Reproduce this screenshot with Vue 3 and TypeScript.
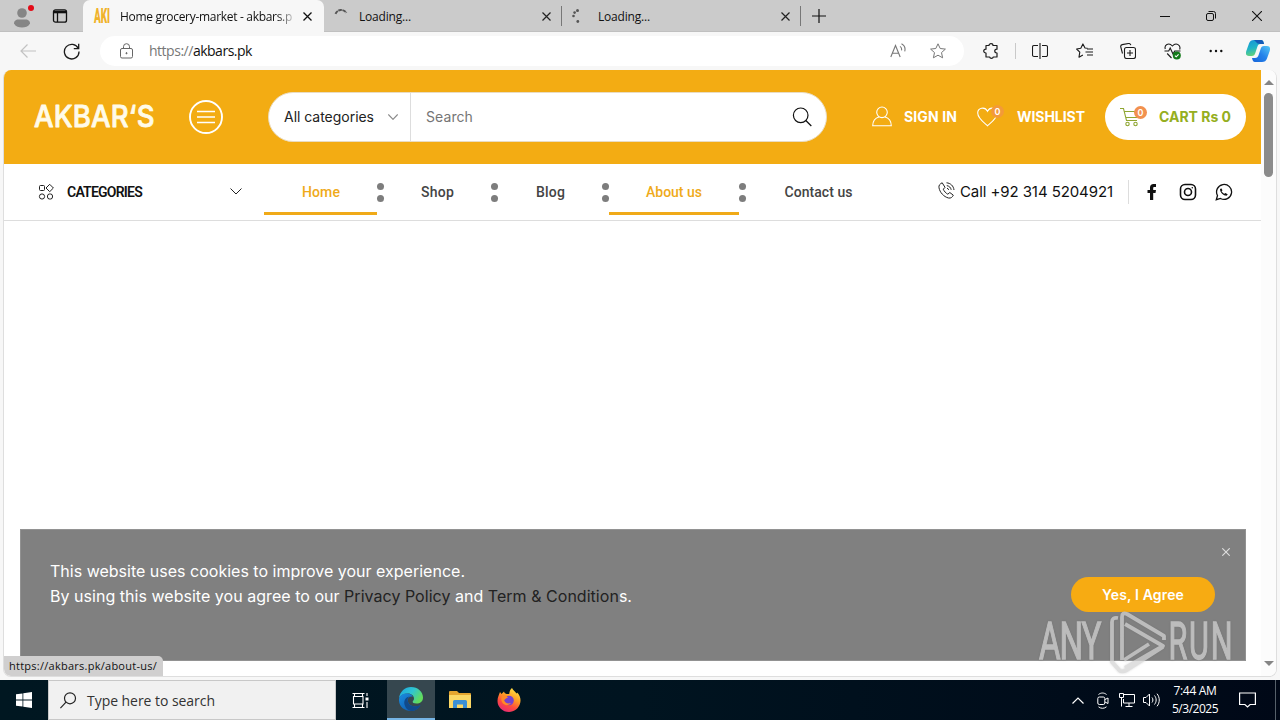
<script setup lang="ts">
import type { Directive } from 'vue'

interface NavItem {
  label: string
  key: string
  textWidth: number
  active: boolean
}

const navItems: NavItem[] = [
  { label: 'Home', key: 'home', textWidth: 38, active: true },
  { label: 'Shop', key: 'shop', textWidth: 33, active: false },
  { label: 'Blog', key: 'blog', textWidth: 29, active: false },
  { label: 'About us', key: 'about', textWidth: 56, active: true },
  { label: 'Contact us', key: 'contact', textWidth: 68, active: false },
]

// Spaces the letters so that a label takes exactly the given width.
const vFit: Directive<HTMLElement, number> = {
  mounted(el, { value }) {
    const count = (el.textContent ?? '').length
    if (count < 2) return
    const natural = el.getBoundingClientRect().width
    el.style.letterSpacing = `${(value - natural) / count}px`
  },
}
</script>

<template>
  <div class="screen">
    <header class="tabs">
      <div class="tab-tools">
        <svg class="profile" width="28" height="28" viewBox="0 0 28 28">
          <circle cx="14" cy="11" r="4.800" fill="#858585" />
          <path d="M6 21.500c0-3 2.500-4 4-4h8c1.500 0 4 1 4 4-1.500 3-5 4-8 4s-6.500-1-8-4z" fill="#858585" />
          <circle cx="23" cy="6" r="3" fill="#e30b17" />
        </svg>
        <svg width="16" height="16" viewBox="0 0 16 16" fill="none" stroke="#111" stroke-width="1.300">
          <rect x="1.500" y="1.800" width="13" height="12.400" rx="2" />
          <path d="M2 4h12" stroke-width="2.600" />
          <path d="M5.500 4v10" />
        </svg>
      </div>
      <div class="tab tab-active">
        <svg class="favicon" width="17" height="24" viewBox="0 0 17 24">
          <text transform="scale(.5 1)" x="0" y="19" font-family="Roboto, sans-serif" font-size="20" font-weight="900" textLength="32" fill="#f0b22a">AKI</text>
        </svg>
        <div class="tab-title title-page"><span v-fit="172">Home grocery-market - akbars.p</span></div>
        <svg class="close" width="9" height="9" viewBox="0 0 9 9" stroke="#111" stroke-width="1.300"><path d="M.5.5l8 8M8.500.5l-8 8" /></svg>
      </div>
      <div class="tab tab-idle">
        <svg class="spinner" width="16" height="16" viewBox="0 0 16 16" fill="none" stroke="#555" stroke-width="2">
          <path d="M2.500 5.800A6.200 6.200 0 0 1 13.400 4.800" stroke-dasharray="3.600 .6" />
        </svg>
        <div class="tab-title"><span v-fit="52">Loading...</span></div>
        <svg class="close" width="9" height="9" viewBox="0 0 9 9" stroke="#222" stroke-width="1.200"><path d="M.5.5l8 8M8.500.5l-8 8" /></svg>
      </div>
      <div class="tab tab-idle tab-third">
        <svg class="spinner" width="16" height="16" viewBox="0 0 16 16" fill="#555">
          <circle cx="6.500" cy="2.500" r="1.500" /><circle cx="3.600" cy="4.600" r="1.300" /><circle cx="2.500" cy="8" r="1.300" /><circle cx="6.800" cy="13.500" r="1.400" />
        </svg>
        <div class="tab-title"><span v-fit="52">Loading...</span></div>
        <svg class="close" width="9" height="9" viewBox="0 0 9 9" stroke="#222" stroke-width="1.200"><path d="M.5.5l8 8M8.500.5l-8 8" /></svg>
      </div>
      <div class="new-tab">
        <svg width="14" height="14" viewBox="0 0 14 14" stroke="#111" stroke-width="1.200"><path d="M7 0v14M0 7h14" /></svg>
      </div>
      <div class="window-buttons">
        <svg width="10" height="10" viewBox="0 0 10 10" stroke="#111"><path d="M0 5.500h10" /></svg>
        <svg width="10" height="10" viewBox="0 0 10 10" fill="none" stroke="#111"><rect x=".5" y="2.500" width="7" height="7" rx="1.500" /><path d="M2.500.5h5a2 2 0 0 1 2 2v5" /></svg>
        <svg width="10" height="10" viewBox="0 0 10 10" stroke="#111" stroke-width="1.100"><path d="M0 0l10 10M10 0L0 10" /></svg>
      </div>
    </header>

    <div class="toolbar">
      <svg class="back" width="16" height="16" viewBox="0 0 16 16" fill="none" stroke="#c2c2c2" stroke-width="1.200"><path d="M16 8H1M7.500 1.500L1 8l6.500 6.500" /></svg>
      <svg class="reload" width="17" height="17" viewBox="0 0 17 17" fill="none" stroke="#1b1b1b" stroke-width="1.300"><path d="M15.300 5.500A7.300 7.300 0 1 0 16 8.500M15.700 .8v4.900h-4.900" /></svg>
      <div class="address">
        <svg class="lock" width="13" height="16" viewBox="0 0 13 16" fill="none" stroke="#666"><rect x=".5" y="5.500" width="12" height="9.500" rx="1.500" /><path d="M3.500 5.500V3.700a3 3 0 0 1 6 0v1.800" /><circle cx="6.500" cy="10.200" r=".6" fill="#666" /></svg>
        <span v-fit="103" class="url"><i>https://</i>akbars.pk</span>
        <svg class="aloud" width="16" height="16" viewBox="0 0 16 16" fill="none" stroke="#777" stroke-width="1.100"><path d="M.8 14L5.500 2.500 10.200 14M2.300 10.200h6.400M10 3.400c1.400.9 1.900 2.300 1.500 4M11.500.8c2.900 1.600 4.100 4.400 3.200 7.500" /></svg>
        <svg class="star" width="16" height="16" viewBox="0 0 16 16" fill="none" stroke="#777" stroke-linejoin="round"><path d="M8 .8l2.200 4.700 5.200.6-3.900 3.500 1.100 5.200L8 12.200l-4.600 2.600 1.100-5.200L.6 6.100l5.200-.6z" /></svg>
      </div>
      <div class="tool">
        <svg width="16" height="16" viewBox="0 0 16 16" fill="none" stroke="#1b1b1b" stroke-width="1.200" stroke-linejoin="round"><path d="M3 2.500h3c0-2.500 4-2.500 4 0h4v3.700c-3 0-3 3.800 0 3.800v4h-3.700c-.5 1.700-3.200 1.700-3.700 0H3V10c-3 0-3-3.800 0-3.800z" /></svg>
      </div>
      <div class="tool-rule"></div>
      <div class="tool">
        <svg width="16" height="16" viewBox="0 0 16 16" fill="none" stroke="#1b1b1b" stroke-width="1.100"><path d="M6 2.500H2a1.500 1.500 0 0 0-1.500 1.500v8A1.500 1.500 0 0 0 2 13.500h4M10 2.500h4A1.500 1.500 0 0 1 15.500 4v8a1.500 1.500 0 0 1-1.500 1.500h-4M8 0v16" /></svg>
      </div>
      <div class="tool">
        <svg width="17" height="16" viewBox="0 0 17 16" fill="none" stroke="#1b1b1b" stroke-width="1.100" stroke-linejoin="round"><path d="M11.500 5.200L9 5 6.900.9 4.800 5.300.6 6l3.200 3.200-.8 5 3.900-2.100M11 6h6M9.500 9H17M11 12h6" /></svg>
      </div>
      <div class="tool">
        <svg width="16" height="16" viewBox="0 0 16 16" fill="none" stroke="#1b1b1b" stroke-width="1.100"><rect x="4.500" y="4.500" width="11" height="11" rx="2" /><path d="M10 7v6M7 10h6M2.500 10.500L.8 4A2 2 0 0 1 2.200 1.600L8.500.5a2 2 0 0 1 2.300 1.700" /></svg>
      </div>
      <div class="tool">
        <svg width="17" height="17" viewBox="0 0 17 17" fill="none" stroke="#1b1b1b" stroke-width="1.100"><path d="M1.300 6C0 2.500 4.500-1.300 8.400 3 12.300-1.300 17.200 2.500 15.600 6.500M.5 8h4.200l1.500-3 2.800 6 1.700-3h5.800M3.200 10.500L7.500 15" /><circle cx="12.800" cy="12.500" r="4" fill="#137a19" stroke="none" /><path d="M10.900 12.600l1.300 1.200 2.400-2.500" stroke="#fff" /></svg>
      </div>
      <div class="tool">
        <svg width="14" height="4" viewBox="0 0 14 4" fill="#111"><circle cx="1.700" cy="2" r="1.200" /><circle cx="7" cy="2" r="1.200" /><circle cx="12.300" cy="2" r="1.200" /></svg>
      </div>
      <div class="tool tool-copilot">
        <svg width="24" height="24" viewBox="0 0 24 24">
          <defs>
            <linearGradient id="cp-left" x1="0" y1="0" x2="0.3" y2="1"><stop offset="0" stop-color="#1693d8" /><stop offset=".55" stop-color="#20b4c7" /><stop offset="1" stop-color="#62d17a" /></linearGradient>
            <linearGradient id="cp-right" x1="1" y1="0" x2="0" y2="1"><stop offset="0" stop-color="#55c8f5" /><stop offset=".5" stop-color="#2482ea" /><stop offset="1" stop-color="#1764d9" /></linearGradient>
          </defs>
          <path d="M8 1h7c2 0 2.500 2 3 4h-3.500c-2 0-2.700 1-3.200 3l-2 6c-.6 2-1.500 3-3.500 3H3c-3 0-3.500-2-2.700-5L3 4.500C3.800 2 5.500 1 8 1z" fill="url(#cp-left)" />
          <path d="M16 23H9c-2 0-2.500-2-3-4h3c2 0 3-1 3.600-3l2-6c.6-2 1.400-3 3.400-3h3c3 0 3.500 2 2.700 5L21 19.500c-.8 2.500-2.500 3.500-5 3.500z" fill="url(#cp-right)" />
          <path d="M8 1h7c2 0 2.500 2 3 4h-3.500l-3-.5z" fill="#145bb8" />
        </svg>
      </div>
    </div>

    <main class="viewport">
      <div class="page">
        <div class="shop-header">
          <svg class="logo" width="122" height="40" viewBox="0 0 122 40">
            <text transform="scale(.92 1)" x="0" y="30.500" font-family="Inter, sans-serif" font-size="30" font-weight="500" textLength="131" fill="#fffbe9" stroke="#fffbe9" stroke-width=".8" stroke-linejoin="round">AKBAR‘S</text>
          </svg>
          <svg class="menu" width="34" height="34" viewBox="0 0 34 34" fill="none" stroke="#fff"><circle cx="17" cy="17" r="16" stroke-width="1.900" /><path d="M8 11.500h18M8 17h18M8 22.500h18" stroke-width="1.400" /></svg>
          <div class="search">
            <div class="search-category">
              <span v-fit="90">All categories</span>
              <svg width="10" height="6" viewBox="0 0 10 6" fill="none" stroke="#888" stroke-width="1.200"><path d="M.3.5L5 5.300 9.700.5" /></svg>
            </div>
            <span v-fit="47" class="search-hint">Search</span>
            <svg class="search-icon" width="20" height="20" viewBox="0 0 20 20" fill="none" stroke="#111" stroke-width="1.200"><circle cx="8.700" cy="8.300" r="7.300" /><path d="M13.800 13.500l5.500 5.500" /></svg>
          </div>
          <svg class="user" width="20" height="21" viewBox="0 0 20 21" fill="none" stroke="#fff" stroke-width="1.100"><circle cx="10" cy="6.300" r="5.300" /><path d="M7 11C3 12 .8 15 .7 19.800h18.600C19.200 15 17 12 13 11" /></svg>
          <b v-fit="53" class="sign-in">SIGN IN</b>
          <div class="heart">
            <svg width="21" height="20" viewBox="0 0 21 20" fill="none" stroke="#fff" stroke-width="1.100"><path d="M10.500 18.800C7 15.700.7 11.200.7 6c0-5 7-7 9.800-1.700C13.300-1 20.300 1 20.300 6c0 5.200-6.300 9.700-9.800 12.800z" /></svg>
            <em class="badge">0</em>
          </div>
          <b v-fit="68" class="wishlist">WISHLIST</b>
          <div class="cart">
            <div class="cart-icon">
              <svg width="20" height="20" viewBox="0 0 20 20" fill="none" stroke="#8fa632" stroke-width="1.100"><path d="M0 1.500h3.500l3 12H17M4.500 4.500h14L17 10.500H6" /><circle cx="7.500" cy="17" r="1.700" /><circle cx="15.500" cy="17" r="1.700" /></svg>
              <em class="badge">0</em>
            </div>
            <b v-fit="72">CART Rs 0</b>
          </div>
        </div>

        <nav class="nav">
          <div class="all-cats">
            <svg width="16" height="16" viewBox="0 0 16 16" fill="none" stroke="#222"><rect x="1.500" y="1.500" width="5" height="5" rx="1" /><path d="M11.700.3l3.700 3.700-3.700 3.700L8 4z" /><circle cx="4" cy="12.500" r="2.600" /><rect x="9.500" y="10" width="5" height="5" rx="2" /></svg>
            <b v-fit="75">CATEGORIES</b>
            <svg class="cats-arrow" width="12" height="7" viewBox="0 0 12 7" fill="none" stroke="#222"><path d="M.5.5L6 6 11.500.5" /></svg>
          </div>
          <template v-for="(item, i) in navItems" :key="item.key">
            <div v-if="i > 0" class="nav-dots"><i></i><i></i></div>
            <a class="nav-item" :class="[item.key, { active: item.active }]"><span v-fit="item.textWidth">{{ item.label }}</span></a>
          </template>
          <div class="contact-bar">
            <svg width="17" height="17" viewBox="0 0 17 17" fill="none" stroke="#222"><path d="M4.200.8C2 1.800.5 3.300 1 5.800c.8 4.500 4.700 9 9.500 10.200 2.500.5 4-1 4.800-2.800l-3.500-2.700-2 1.700C8 11.300 6 9.200 5.300 7.200L7 5.300z" /><path d="M8.500.8c4 .3 7 3 7.500 7.200M8.800 3.600c2.400.4 4 2 4.400 4.200M9 6.200c1 .3 1.400.8 1.700 1.700" /></svg>
            <span v-fit="153" class="phone">Call +92 314 5204921</span>
            <svg class="social" width="16" height="18" viewBox="0 0 16 18" fill="#111"><path d="M6 17V10H3.500V7H6V4.600C6 2.200 7.300 1 9.500 1H12v2.900h-1.500C9.500 3.900 9.200 4.300 9.200 5.200V7H12l-.5 3H9.200v7z" /></svg>
            <svg class="social" width="18" height="18" viewBox="0 0 18 18" fill="none" stroke="#111" stroke-width="1.600"><rect x="1.500" y="1.500" width="15" height="15" rx="4.500" /><circle cx="9" cy="9" r="3.500" /><circle cx="13.300" cy="4.700" r=".8" fill="#111" stroke="none" /></svg>
            <svg class="social" width="18" height="18" viewBox="0 0 18 18" fill="none" stroke="#111" stroke-width="1.300"><path d="M1.300 16.700l1.200-4.200A7.500 7.500 0 1 1 5.500 15.500z" /><path d="M6.200 5.200L5 6.300c.2 3.500 3.300 6.400 6.500 6.500l1.300-1.300-2.200-1.600-1.300.9C8 10.200 7 9.200 6.600 8.300l.9-1z" fill="#111" stroke="none" /></svg>
          </div>
        </nav>

        <section class="cookies">
          <div class="cookie-text">
            <p><span v-fit="415">This website uses cookies to improve your experience.</span></p>
            <p><span v-fit="582">By using this website you agree to our <a>Privacy Policy</a> and <a>Term &amp; Condition</a>s.</span></p>
          </div>
          <div class="cookie-side">
            <svg width="8" height="8" viewBox="0 0 8 8" stroke="#ddd" stroke-width="1.100"><path d="M.3.3l7.400 7.400M7.700.3L.3 7.700" /></svg>
            <button type="button"><span v-fit="82">Yes, I Agree</span></button>
          </div>
        </section>
      </div>
      <div class="scrollbar">
        <svg width="10" height="5" viewBox="0 0 10 5" fill="#858585"><path d="M0 5L5 0l5 5z" /></svg>
        <div class="thumb"></div>
        <svg class="down" width="10" height="5" viewBox="0 0 10 5" fill="#858585"><path d="M0 0l5 5 5-5z" /></svg>
      </div>
      <div class="status"><span v-fit="148">https://akbars.pk/about-us/</span></div>
    </main>

    <footer class="taskbar">
      <div class="start">
        <svg width="16" height="16" viewBox="0 0 16 16" fill="#fff"><path d="M0 2.300L6.500 1.400v6.200H0zM7.300 1.300L16 0v7.600H7.300zM0 8.400h6.500v6.200L0 13.700zM7.300 8.400H16V16l-8.700-1.300z" /></svg>
      </div>
      <div class="task-search">
        <svg width="17" height="17" viewBox="0 0 17 17" fill="none" stroke="#222" stroke-width="1.200"><circle cx="10" cy="6.300" r="5.500" /><path d="M6 10.200L.4 16.200" /></svg>
        <span v-fit="128">Type here to search</span>
      </div>
      <div class="task">
        <svg width="17" height="17" viewBox="0 0 17 17" fill="none" stroke="#fff" stroke-width="1.100"><path d="M.5 1.500h12M2.500 1.500v3M10.500 1.500v3M1.500 4.500h9.500v7.500H1.500zM.5 15.500h12M2.500 12v3.500M10.500 12v3.500M15 1v3M15 10v6" /><path d="M13.500 5.500h3v3h-3z" fill="#fff" stroke="none" /></svg>
      </div>
      <div class="task task-open">
        <svg width="24" height="24" viewBox="0 0 24 24">
          <defs>
            <linearGradient id="ed-top" x1="0" y1="0" x2="1" y2=".5"><stop offset="0" stop-color="#1ba4df" /><stop offset=".55" stop-color="#2fc5d2" /><stop offset="1" stop-color="#62dc5c" /></linearGradient>
            <linearGradient id="ed-low" x1="0" y1="0" x2="1" y2="1"><stop offset="0" stop-color="#1a8de0" /><stop offset="1" stop-color="#0d4fa3" /></linearGradient>
          </defs>
          <path d="M0 11C1 4.500 6 0 12 0c7 0 12 5 12 10.500 0 4-3 6-6.500 6-3 0-4-1-3.800-2 .1-.7 1.300-1.200 1.300-3C15 9 12.500 6.500 9 6.500 4.500 6.500 1.500 8.500 0 11z" fill="url(#ed-top)" />
          <path d="M0 12c.5-4 5-6 9-5.500 2.500.3 4 1.500 5 3-4.500-.5-6 2.500-5 5.500 1.200 4 6.500 6 12.500 3-2 4-6 6-9.500 6C5 24-.5 19 0 12z" fill="url(#ed-low)" />
          <path d="M9 15c-1-3 0-5 2-5.500-4 .2-6.500 4-5.500 8 .8 3.500 3.500 6 6.500 6.500 3.500 0 7.500-2 9.500-6-6 3-11.300 1-12.500-3z" fill="#114a8b" />
        </svg>
      </div>
      <div class="task">
        <svg width="22" height="20" viewBox="0 0 22 20"><path d="M0 2a1 1 0 0 1 1-1h7l2 2h11a1 1 0 0 1 1 1v4H0z" fill="#e5a52f" /><path d="M0 5h22v13H0z" fill="#fbd765" /><path d="M4 18v-6.500A1.500 1.500 0 0 1 5.500 10h11a1.500 1.500 0 0 1 1.500 1.500V18h-4v-3.500H8V18z" fill="#3b8fd4" /></svg>
      </div>
      <div class="task">
        <svg width="24" height="24" viewBox="0 0 24 24">
          <defs><linearGradient id="ff" x1=".8" y1="0" x2=".3" y2="1"><stop offset="0" stop-color="#ffe94a" /><stop offset=".4" stop-color="#ff9e24" /><stop offset=".7" stop-color="#ff4b3e" /><stop offset="1" stop-color="#e62a75" /></linearGradient></defs>
          <path d="M15 0c1 2.500 3 3 4.500 5.500.6-.1.700-.5.700-1C23 7.500 24 11 23.300 14.500 22 20.500 17 24 12 24 5.500 24 .5 19 .5 13c0-4 1.500-6 2.500-9l1.500 2L7 3.500c.5 1.500 1 2 2.500 2.500h2.700C12.500 3 13.500 1 15 0z" fill="url(#ff)" />
          <circle cx="12" cy="12.500" r="4.800" fill="#7542cf" />
          <path d="M5 8c3-1 5 0 6 1.500-2 .3-2 1.500-4 2.500 1 3 3.500 4 7 3-2 3-7 3-9-1-1-2-.8-4 0-6z" fill="#ff8a27" />
        </svg>
      </div>
      <div class="tray">
        <svg width="12" height="7" viewBox="0 0 12 7" fill="none" stroke="#fff" stroke-width="1.200"><path d="M.5 6.500L6 1l5.500 5.500" /></svg>
        <svg width="12" height="17" viewBox="0 0 12 17" fill="none" stroke="#fff"><rect x=".8" y="5" width="7" height="7.500" rx="1.500" /><path d="M8 7.500l3-1.500v5.500L8 10M1.500 2.500c2.500-2 5.500-2 8 0M1.500 14.800c2.500 2 5.500 2 8 0" /></svg>
        <svg width="16" height="14" viewBox="0 0 16 14" fill="none" stroke="#fff"><path d="M5 1.500h10.500v8.500H4.500V6M10 10v3M6.500 13.500h7" /><path d="M.5.500h4v4h-4zM2.500 4.500v9" /></svg>
        <svg width="17" height="14" viewBox="0 0 17 14" fill="none" stroke="#fff"><path d="M.5 4.500H3l3.500-3.500v12L3 9.500H.5zM9 4.500c1.200 1.500 1.200 3.500 0 5M11.500 2.500c2.200 2.700 2.200 6.300 0 9M14 .7c3 3.700 3 8.900 0 12.600" /></svg>
      </div>
      <div class="clock"><span v-fit="43">7:44 AM</span><span v-fit="46">5/3/2025</span></div>
      <svg class="notify" width="17" height="16" viewBox="0 0 17 16" fill="none" stroke="#fff" stroke-width="1.200"><path d="M.6 1h15.800v11.500h-5.300L8.500 15l-2.600-2.500H.6z" /></svg>
      <div class="show-desktop"></div>
    </footer>

    <svg class="watermark" width="200" height="68" viewBox="0 0 200 68">
      <g fill="#d4d4d4" stroke="#d4d4d4" stroke-width="1.300" font-family="Roboto, sans-serif" font-size="51" font-weight="400">
        <text transform="scale(.65 1)" x="3" y="51" textLength="96">ANY</text>
        <text transform="scale(.6 1)" x="219" y="51" textLength="107">RUN</text>
      </g>
      <g fill="none" stroke="#d4d4d4" stroke-width="3.800" stroke-linejoin="round">
        <path d="M81 10q-6-1-6 4v40l8 9q3 1 7-1l36-23" />
        <path d="M85 52V9q0-5 5-3l37 22v4" />
        <path d="M88 16l38 22-38 22" />
        <path d="M87 52l25-16" />
      </g>
    </svg>
  </div>
</template>

<style>
body {
  overflow: hidden;
}
</style>

<style scoped>
.screen {
  position: relative;
  display: flex;
  flex-direction: column;
  width: 1280px;
  height: 720px;
  overflow: hidden;
  background: #f7f7f7;
  color: #111;
  font-family: "Open Sans", "Noto Sans", sans-serif;
  font-size: 12px;
}
.screen * { box-sizing: border-box; }
svg { display: block; flex: none; }
span, b { white-space: pre; flex: none; }
.tab-title span, .cookie-text span, .status span { display: inline-block; }

.tabs { display: flex; height: 32px; background: #cbcbcb; border-bottom: 1px solid #c0c0c0; }
.tab-tools { display: flex; align-items: center; width: 83px; padding-left: 8px; gap: 16px; }
.tab { display: flex; align-items: center; }
.tab-active { width: 241px; height: 33px; padding: 0 12px 1px 11px; background: #f7f7f7; border-radius: 7px 7px 0 0; }
.favicon { margin-right: 9px; overflow: visible; }
.tab-title { width: 183px; line-height: 31px; }
.title-page { width: 174px; mask-image: linear-gradient(90deg, #000 90%, transparent 102%); }
.title-page + .close { margin-left: 9px; }
.tab-idle { width: 238px; padding-left: 9px; border-right: 1px solid #777; margin: 6px 0 5px; }
.tab-third { width: 239px; }
.spinner { margin-right: 10px; }
.tab-third .spinner { margin-right: 11px; }
.new-tab { display: flex; align-items: center; padding-left: 11px; }
.window-buttons { display: flex; align-items: center; gap: 36px; margin-left: auto; padding-right: 18px; }

.toolbar { display: flex; align-items: center; height: 38px; }
.back { margin-left: 20px; }
.reload { margin: 0 20px 0 27px; }
.address { display: flex; align-items: center; width: 864px; height: 30px; padding: 0 18px 0 20px; margin-right: 5px; border-radius: 15px; background: #fff; }
.url { margin-left: 16px; font-size: 14px; line-height: 28px; }
.url i { color: #777; font-style: normal; }
.aloud { margin-left: auto; }
.star { margin-left: 24px; }
.tool { display: flex; align-items: center; justify-content: center; width: 44px; }
.tool-rule { width: 1px; height: 16px; margin: 0 2px; background: #c9c9c9; }
.tool-copilot { width: 40px; }

.viewport { position: relative; display: flex; width: 1274px; height: 607px; margin-left: 3px; border: 1px solid #dedede; border-top: 0; border-radius: 8px; background: #fff; overflow: hidden; }
.page { display: flex; flex-direction: column; width: 1257px; height: 606px; font-family: Inter, "Liberation Sans", sans-serif; }
.shop-header { display: flex; align-items: center; height: 94px; background: #f3ac13; color: #fff; }
.logo { margin-left: 30px; overflow: visible; }
.menu { margin-left: 33px; }
.search { display: flex; align-items: center; width: 559px; height: 50px; margin-left: 45px; border: 1px solid #e9dcc2; border-radius: 25px; background: #fff; }
.search-category { display: flex; align-items: center; width: 142px; height: 48px; padding-left: 15px; border-right: 1px solid #ddd; color: #222; font-size: 14px; }
.search-category span, .search-hint, .sign-in, .wishlist, .cart b { margin-bottom: 1px; }
.search-category svg { margin-left: 14px; }
.search-hint { margin-left: 15px; color: #757575; font-size: 14px; }
.search-icon { margin-left: auto; margin-right: 14px; }
.user { margin: -2px 0 0 45px; }
.sign-in { margin-left: 12px; font-size: 14px; }
.heart, .cart-icon { position: relative; }
.heart { margin-left: 20px; }
.badge { position: absolute; top: -1px; left: 14px; width: 13px; height: 13px; border-radius: 50%; background: #f2914f; color: #fff; font-size: 9px; font-style: normal; font-weight: 600; line-height: 13px; text-align: center; }
.heart .badge { background: #f39a38; top: -2px; }
.wishlist { margin-left: 19px; font-size: 14px; }
.cart { display: flex; align-items: center; width: 141px; height: 46px; margin-left: 20px; padding-left: 15px; border-radius: 23px; background: #fff; color: #95ae20; font-size: 14px; }
.cart-icon { margin-right: 19px; }

.nav { display: flex; align-items: center; height: 57px; border-bottom: 1px solid #ddd; font-family: Roboto, sans-serif; }
.all-cats { display: flex; align-items: center; width: 260px; padding-left: 34px; font-size: 14px; }
.all-cats b { margin-left: 13px; font-weight: 600; }
.cats-arrow { margin: -2px 0 0 88px; }
.nav-item { display: flex; align-items: center; justify-content: center; height: 45px; padding-top: 2px; border-bottom: 3px solid transparent; color: #444; font-size: 14px; font-weight: 500; }
.nav-item.active { border-bottom-color: #f0aa18; color: #efaa1a; }
.home { width: 113px; padding-left: 1px; }
.shop { width: 107px; }
.blog { width: 104px; padding-left: 1px; }
.about { width: 130px; }
.contact { width: 145px; }
.nav-dots { display: flex; flex-direction: column; justify-content: center; gap: 5px; width: 7px; }
.nav-dots i { width: 7px; height: 7px; border-radius: 50%; background: #7d7d7d; }
.contact-bar { display: flex; align-items: center; margin-left: auto; padding-right: 28px; font-family: Inter, sans-serif; }
.contact-bar > svg:first-child { margin-top: -3px; }
.phone { margin-left: 5px; font-size: 15px; line-height: 24px; }
.social { margin-left: 18px; }
.phone + .social { box-sizing: content-box; margin-left: 15px; padding: 3px 0 3px 15px; border-left: 1px solid #ddd; }
.phone + .social + .social { margin-left: 19px; }

.cookies { display: flex; justify-content: space-between; width: 1226px; height: 132px; margin: auto 15px 15px 16px; padding: 30px 30px 0; border: 1px solid #929292; background: #808080; color: #fff; font-size: 16px; }
.cookie-text { margin: -1px 0 0 -1px; }
.cookie-text p { height: 25px; margin: 0; line-height: 25px; }
.cookie-text a { color: #222; }
.cookie-side { display: flex; flex-direction: column; align-items: flex-end; margin-top: -12px; }
.cookie-side svg { margin-right: -15px; }
.cookie-side button { width: 144px; height: 35px; margin-top: 21px; padding: 0; border: 0; border-radius: 18px; background: #f7ab12; color: #fff; font: 600 14px Inter, sans-serif; }

.scrollbar { display: flex; flex-direction: column; align-items: center; width: 15px; padding: 10px 0; background: #fcfcfc; }
.thumb { width: 9px; height: 84px; margin-top: 8px; border-radius: 5px; background: #8b8b8b; }
.down { margin-top: auto; }
.status { position: absolute; left: 0; bottom: 0; width: 159px; height: 20px; padding-left: 5px; border-radius: 0 5px 0 6px; background: #d0cfcf; font-size: 11px; line-height: 19px; }

.taskbar { display: flex; align-items: center; height: 40px; margin-top: 3px; background: linear-gradient(90deg, #001721, #001420 50%, #000817); color: #fff; }
.start { display: flex; justify-content: center; width: 48px; }
.task-search { display: flex; align-items: center; width: 288px; height: 40px; padding-left: 11px; border: 1px solid #c8c8c8; background: #f1f1f1; color: #333; font-size: 14px; }
.task-search span { margin-left: 10px; }
.task { display: flex; align-items: center; justify-content: center; width: 49px; height: 40px; }
.task-search + .task { width: 51px; padding-right: 3px; }
.task-open { width: 48px; border-bottom: 2px solid #76b5e5; background: #36474f; }
.tray { display: flex; align-items: center; gap: 10px; margin-left: auto; }
.tray svg:nth-child(2) { margin-left: 3px; }
.tray svg:nth-child(4) { margin-left: -2px; }
.clock { display: flex; flex-direction: column; align-items: center; width: 46px; margin-left: 12px; line-height: 18px; }
.notify { margin-left: 21px; }
.show-desktop { width: 1px; height: 40px; margin: 0 4px 0 19px; background: #56606a; }

.watermark { position: absolute; left: 1037px; top: 608px; opacity: 0.72; filter: drop-shadow(0 0 1px rgba(80, 80, 80, 0.3)); }
</style>
